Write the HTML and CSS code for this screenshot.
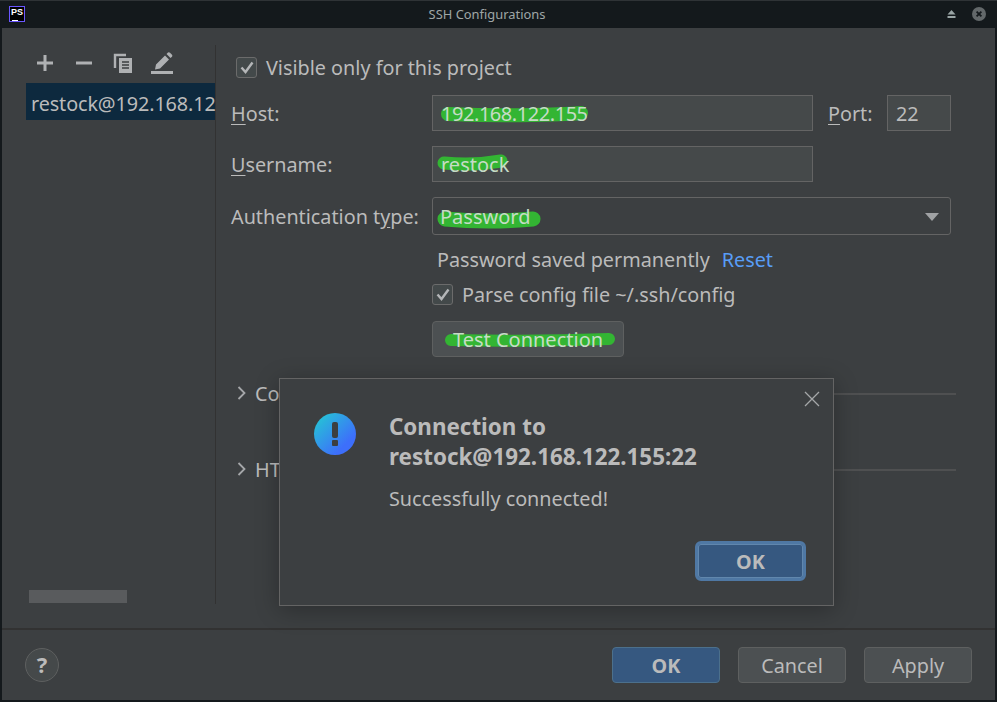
FILE: index.html
```html
<!DOCTYPE html>
<html lang="en">
<head>
    <meta charset="UTF-8">
    <meta name="viewport" content="width=device-width, initial-scale=1.0">
    <title>SSH Configurations</title>
    <link rel="stylesheet" href="styles.css">
</head>
<body>

    <div class="window">
        <div class="titlebar">
            <div class="app-icon"><span>PS</span></div>
            <div class="window-title">SSH Configurations</div>
            <div class="window-buttons">
                <svg width="9" height="8" viewBox="0 0 9 8"><path d="M4.5 0 L8.5 4.5 H0.5 Z M0.5 6 H8.5 V8 H0.5 Z" fill="#9aa5a5"/></svg>
                <svg width="14" height="14" viewBox="0 0 14 14"><circle cx="7" cy="7" r="7" fill="#63686a"/><path d="M4.6 4.6 L9.4 9.4 M9.4 4.6 L4.6 9.4" stroke="#14191c" stroke-width="1.8"/></svg>
            </div>
        </div>

        <div class="content">
            <div class="sidebar">
                <div class="toolbar">
                    <div class="tool"><svg width="18" height="18" viewBox="0 0 18 18"><path d="M1 9 H17 M9 1 V17" stroke="#afb1b3" stroke-width="3"/></svg></div>
                    <div class="tool"><svg width="18" height="18" viewBox="0 0 18 18"><path d="M1 9 H17" stroke="#afb1b3" stroke-width="3"/></svg></div>
                    <div class="tool"><svg width="20" height="21" viewBox="0 0 20 21"><path d="M13 2 H2 V15" fill="none" stroke="#afb1b3" stroke-width="2.4"/><path d="M6 5 H19 V20 H6 Z" fill="#afb1b3"/><path d="M9 9 H16 M9 12 H16 M9 15 H16" stroke="#3c3f41" stroke-width="1.3"/></svg></div>
                    <div class="tool"><svg width="24" height="23" viewBox="0 0 24 23"><path d="M1 20.5 H23" stroke="#afb1b3" stroke-width="3"/><path d="M5 17.5 L6 12.5 L15 3.5 L19 7.5 L10 16.5 Z M16.5 2 L18 0.6 Q19 0 20 0.8 L22 2.8 Q22.8 3.8 22 4.8 L20.5 6 Z" fill="#afb1b3"/></svg></div>
                </div>
                <div class="host-item">restock@192.168.12</div>
                <div class="scroll-thumb"></div>
            </div>

            <div class="form">
                <div class="check-row visible-row">
                    <span class="checkbox"><svg width="14" height="13" viewBox="0 0 14 13"><path d="M1.5 6.5 L5.5 11 L12.5 1.5" fill="none" stroke="#b4b6b8" stroke-width="2.4"/></svg></span>
                    <span>Visible only for this project</span>
                </div>
                <div class="row host-row">
                    <label class="field-label"><u>H</u>ost:</label>
                    <div class="input wide">
                        <svg class="scribble" width="160" height="30" viewBox="0 0 160 30"><path d="M15 18 Q60 20 100 19 T148 17" fill="none" stroke="#33b533" stroke-width="14" stroke-linecap="round"/></svg>
                        <span class="marked host-value">192.168.122.155</span>
                    </div>
                    <label class="port-label"><u>P</u>ort:</label>
                    <div class="input port">22</div>
                </div>
                <div class="row user-row">
                    <label class="field-label"><u>U</u>sername:</label>
                    <div class="input wide">
                        <svg class="scribble" width="90" height="30" viewBox="0 0 90 30"><path d="M11 16 Q40 19 68 14" fill="none" stroke="#33b533" stroke-width="13" stroke-linecap="round"/></svg>
                        <span class="marked">restock</span>
                    </div>
                </div>
                <div class="row auth-row">
                    <label class="field-label">Authentication t<u>y</u>pe:</label>
                    <div class="combo">
                        <svg class="scribble" width="120" height="36" viewBox="0 0 120 36"><path d="M12 21 Q55 25 100 21" fill="none" stroke="#33b533" stroke-width="15" stroke-linecap="round"/></svg>
                        <span class="marked">Password</span>
                        <svg class="combo-arrow" width="14" height="8" viewBox="0 0 14 8"><path d="M0 0 H14 L7 8 Z" fill="#a0a2a4"/></svg>
                    </div>
                </div>
                <div class="indent saved-row">
                    <span>Password saved permanently</span>
                    <a class="reset-link">Reset</a>
                </div>
                <div class="check-row indent parse-row">
                    <span class="checkbox"><svg width="14" height="13" viewBox="0 0 14 13"><path d="M1.5 6.5 L5.5 11 L12.5 1.5" fill="none" stroke="#b4b6b8" stroke-width="2.4"/></svg></span>
                    <span>Parse config file ~/.ssh/config</span>
                </div>
                <div class="indent test-row">
                    <div class="btn test-btn">
                        <svg class="scribble" width="190" height="34" viewBox="0 0 190 34"><path d="M18 18 Q100 20 176 17" fill="none" stroke="#33b533" stroke-width="12" stroke-linecap="round"/></svg>
                        <span class="marked">Test Connection</span>
                    </div>
                </div>
                <div class="section section-conn">
                    <svg class="chevron" width="9" height="14" viewBox="0 0 9 14"><path d="M1.5 1 L7.5 7 L1.5 13" fill="none" stroke="#a5a7a9" stroke-width="1.8"/></svg>
                    <span>Connection Parameters</span>
                    <div class="section-line"></div>
                </div>
                <div class="section section-http">
                    <svg class="chevron" width="9" height="14" viewBox="0 0 9 14"><path d="M1.5 1 L7.5 7 L1.5 13" fill="none" stroke="#a5a7a9" stroke-width="1.8"/></svg>
                    <span>HTTP Proxy</span>
                    <div class="section-line"></div>
                </div>
            </div>
        </div>

        <div class="footer">
            <div class="help">?</div>
            <div class="footer-buttons">
                <div class="btn default">OK</div>
                <div class="btn">Cancel</div>
                <div class="btn">Apply</div>
            </div>
        </div>

        <div class="modal">
            <svg class="modal-close" width="16" height="16" viewBox="0 0 16 16"><path d="M1 1 L15 15 M15 1 L1 15" stroke="#a5a7a9" stroke-width="1.3"/></svg>
            <div class="modal-main">
                <div class="modal-icon"><span class="bang"></span><span class="bang-dot"></span></div>
                <div class="modal-text">
                    <div class="modal-title">Connection to<br>restock@192.168.122.155:22</div>
                    <div class="modal-message">Successfully connected!</div>
                </div>
            </div>
            <div class="btn default focused">OK</div>
        </div>
    </div>

</body>
</html>
```

FILE: styles.css
```css
body {
    margin: 0;
    font-family: "Noto Sans", sans-serif;
    font-size: 19.8px;
    color: #bbbbbb;
    background-color: #14191c;
    overflow: hidden;
}
.window {
    position: relative;
    display: flex;
    flex-direction: column;
    width: 997px;
    height: 702px;
    box-sizing: border-box;
    padding: 0 2px 2px 2px;
    background-color: #14191c;
}
.titlebar {
    position: relative;
    display: flex;
    align-items: center;
    justify-content: center;
    height: 28px;
    flex-shrink: 0;
    box-sizing: border-box;
    border-top: 1px solid #2f3336;
    margin: 0 -2px;
}
.app-icon {
    position: absolute;
    left: 9px;
    top: 5px;
    width: 16px;
    height: 16px;
    box-sizing: border-box;
    border: 1px solid #6b57ff;
    background-color: #000;
    color: #fff;
    font-family: "Liberation Sans", sans-serif;
    font-size: 9px;
    font-weight: bold;
    line-height: 11px;
    text-align: center;
}
.app-icon span {
    display: block;
    height: 11px;
    border-bottom: 1px solid transparent;
}
.app-icon::after {
    content: "";
    display: block;
    width: 6px;
    height: 1px;
    margin: 1px 0 0 2px;
    background-color: #fff;
}
.window-title {
    margin: 0 23px 1px 0;
    font-size: 12.9px;
    color: #9fa6a6;
}
.window-buttons {
    position: absolute;
    right: 11px;
    top: 6px;
    display: flex;
    align-items: center;
    gap: 16px;
}
.content {
    display: flex;
    flex: 1;
    min-height: 0;
    box-sizing: border-box;
    padding: 17px 0 24px 0;
    background-color: #3c3f41;
}
.sidebar {
    display: flex;
    flex-direction: column;
    width: 214px;
    flex-shrink: 0;
    box-sizing: border-box;
    padding-left: 24px;
    border-right: 1px solid #323232;
}
.toolbar {
    display: flex;
    gap: 1px;
    height: 38px;
    flex-shrink: 0;
}
.tool {
    display: flex;
    align-items: center;
    justify-content: center;
    width: 38px;
    height: 36px;
}
.host-item {
    height: 37px;
    line-height: 41px;
    padding-left: 5px;
    background-color: #0d293e;
    letter-spacing: -0.1px;
    white-space: nowrap;
    flex-shrink: 0;
}
.scroll-thumb {
    width: 98px;
    height: 13px;
    margin: auto 0 1px 3px;
    background-color: #595b5d;
}
.form {
    flex: 1;
    margin-left: 15px;
    padding-top: 10px;
}
.check-row {
    display: flex;
    align-items: center;
}
.checkbox {
    display: flex;
    align-items: center;
    justify-content: center;
    width: 21px;
    height: 21px;
    box-sizing: border-box;
    border: 1px solid #6b6b6b;
    border-radius: 3px;
    background-color: #43494a;
}
.visible-row {
    height: 25px;
    margin: 0 0 15px 5px;
    gap: 9px;
}
.row {
    display: flex;
    align-items: center;
}
.host-row, .user-row {
    margin-bottom: 15px;
}
.auth-row {
    margin-bottom: 10px;
}
.field-label {
    width: 201px;
    flex-shrink: 0;
}
u {
    text-underline-offset: 3px;
}
.input {
    position: relative;
    height: 36px;
    line-height: 36px;
    box-sizing: border-box;
    border: 1px solid #646464;
    padding-left: 8px;
    background-color: #45494a;
}
.wide {
    width: 381px;
}
.port-label {
    margin-left: 15px;
    width: 59px;
}
.port {
    width: 64px;
}
.combo {
    position: relative;
    display: flex;
    align-items: center;
    width: 519px;
    height: 38px;
    box-sizing: border-box;
    border: 1px solid #646464;
    border-radius: 3px;
    padding-left: 7px;
    background-color: #3c3f41;
}
.combo-arrow {
    position: absolute;
    right: 11px;
    top: 15px;
}
.marked {
    position: relative;
    font-size: 20px;
    color: #c6dcc6;
}
.host-value {
    letter-spacing: -0.45px;
}
.scribble {
    position: absolute;
    left: 0;
    top: 0;
    filter: blur(0.4px);
}
.indent {
    margin-left: 201px;
}
.saved-row {
    display: flex;
    gap: 12px;
    height: 30px;
    line-height: 30px;
    margin-bottom: 5px;
    padding-left: 5px;
}
.reset-link {
    color: #589df6;
}
.parse-row {
    height: 29px;
    gap: 9px;
    margin-bottom: 12px;
}
.test-row {
    margin-bottom: 22px;
}
.btn {
    position: relative;
    display: flex;
    align-items: center;
    justify-content: center;
    width: 108px;
    height: 36px;
    box-sizing: border-box;
    border: 1px solid #5e6060;
    border-radius: 4px;
    background-color: #4c5052;
}
.test-btn {
    width: 192px;
}
.default {
    border-color: #4c708c;
    background-color: #365880;
    font-weight: bold;
}
.section {
    display: flex;
    align-items: center;
    height: 28px;
    margin-left: 6px;
    gap: 9px;
}
.section-conn {
    margin-bottom: 48px;
}
.section-line {
    flex: 1;
    height: 2px;
    margin: 2px 39px 0 0;
    background-color: #4f5051;
}
.footer {
    display: flex;
    align-items: center;
    justify-content: space-between;
    height: 72px;
    flex-shrink: 0;
    box-sizing: border-box;
    border-top: 2px solid #323232;
    padding: 0 23px;
    background-color: #3c3f41;
}
.help {
    width: 34px;
    height: 34px;
    box-sizing: border-box;
    border: 1px solid #5e6060;
    border-radius: 50%;
    background-color: #45494a;
    font-weight: bold;
    font-size: 22px;
    line-height: 31px;
    text-align: center;
}
.footer-buttons {
    display: flex;
    gap: 18px;
}
.modal {
    position: absolute;
    left: 279px;
    top: 378px;
    display: flex;
    flex-direction: column;
    width: 555px;
    height: 228px;
    box-sizing: border-box;
    border: 1px solid #646464;
    padding: 33px 27px 24px 34px;
    background-color: #3c3f41;
    box-shadow: 0 4px 22px rgba(0, 0, 0, 0.28);
}
.modal-close {
    position: absolute;
    right: 13px;
    top: 12px;
}
.modal-main {
    display: flex;
    gap: 33px;
    flex: 1;
}
.modal-icon {
    position: relative;
    width: 42px;
    height: 42px;
    margin-top: 1px;
    border-radius: 50%;
    background: linear-gradient(135deg, #22cfd0, #3d6ffb 75%);
}
.bang {
    position: absolute;
    left: 18px;
    top: 9px;
    width: 6px;
    height: 16px;
    border-radius: 2px;
    background-color: #3c3f41;
}
.bang-dot {
    position: absolute;
    left: 18px;
    top: 27px;
    width: 6px;
    height: 6px;
    border-radius: 1px;
    background-color: #3c3f41;
}
.modal-title {
    font-weight: bold;
    font-size: 22.4px;
    line-height: 30px;
}
.modal-message {
    margin-top: 12px;
    line-height: 30px;
}
.focused {
    align-self: flex-end;
    width: 111px;
    height: 40px;
    border: 3px solid #4f78a4;
    border-radius: 6px;
    box-shadow: inset 0 0 0 1px #6187ad;
}
```
